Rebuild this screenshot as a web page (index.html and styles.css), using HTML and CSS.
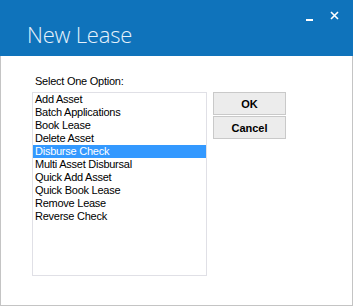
FILE: index.html
```html
<!DOCTYPE html>
<html>
<head>
<meta charset="utf-8">
<link rel="stylesheet" href="styles.css">
</head>
<body>
<div class="window">
  <div class="titlebar">
    <div class="title">New Lease</div>
    <div class="controls">
      <span class="min"></span>
      <svg class="close" width="9" height="9" viewBox="0 0 9 9"><path d="M1 1L8 8M8 1L1 8" stroke="#fff" stroke-width="1.6"/></svg>
    </div>
  </div>
  <div class="body">
    <div class="label">Select One Option:</div>
    <div class="row">
      <div class="list">
        <div class="item">Add Asset</div>
        <div class="item">Batch Applications</div>
        <div class="item">Book Lease</div>
        <div class="item">Delete Asset</div>
        <div class="item selected">Disburse Check</div>
        <div class="item">Multi Asset Disbursal</div>
        <div class="item">Quick Add Asset</div>
        <div class="item">Quick Book Lease</div>
        <div class="item">Remove Lease</div>
        <div class="item">Reverse Check</div>
      </div>
      <div class="buttons">
        <button class="btn">OK</button>
        <button class="btn">Cancel</button>
      </div>
    </div>
  </div>
</div>
</body>
</html>
```
FILE: styles.css
```css
html, body { margin: 0; padding: 0; background: #fff; }
.window {
  width: 353px;
  height: 306px;
  box-sizing: border-box;
  border-left: 1px solid #c4c4c4;
  border-right: 1px solid #c4c4c4;
  border-bottom: 1px solid #c4c4c4;
  position: relative;
}
.titlebar {
  height: 56px;
  margin: 0 -1px;
  background: #0f73bb;
  position: relative;
}
.title {
  position: absolute;
  left: 27px;
  top: 19px;
  font-family: "Open Sans", sans-serif;
  font-weight: 300;
  font-size: 22px;
  color: #e6f2fb;
  letter-spacing: -0.2px;
}
.controls {
  position: absolute;
  right: 14px;
  top: 11px;
  display: flex;
  align-items: flex-start;
  gap: 17px;
}
.min {
  display: block;
  width: 7px;
  height: 2px;
  background: #fff;
  margin-top: 8px;
}
.close { display: block; }
.body {
  padding: 19px 0 0 31px;
  font-family: "Liberation Sans", Arial, sans-serif;
  font-size: 11px;
  color: #000;
  letter-spacing: -0.25px;
}
.label { height: 17px; line-height: 13px; padding-left: 3px; }
.row { display: flex; gap: 6px; }
.list {
  width: 175px;
  height: 184px;
  box-sizing: border-box;
  border: 1px solid #e0e0e6;
}
.item {
  height: 13px;
  line-height: 13px;
  padding-left: 2px;
}
.item.selected { background: #3399ff; color: #fff; }
.buttons { display: flex; flex-direction: column; gap: 1px; }
.btn {
  width: 73px;
  height: 23px;
  margin: 0;
  padding: 0;
  background: #ececec;
  border: 1px solid #c9c9c9;
  font-family: "Liberation Sans", Arial, sans-serif;
  font-weight: bold;
  font-size: 11px;
  color: #000;
}
```
